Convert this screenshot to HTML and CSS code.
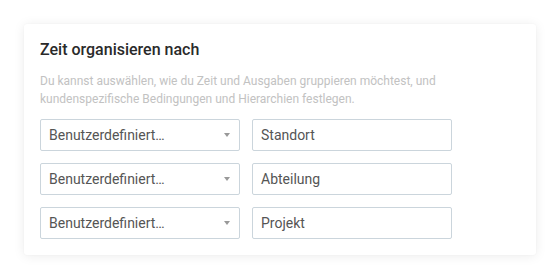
FILE: index.html
```html
<!DOCTYPE html>
<html lang="de">
<head>
<meta charset="utf-8">
<link rel="stylesheet" href="styles.css">
</head>
<body>
<div class="card">
  <h2 class="title">Zeit organisieren nach</h2>
  <p class="desc">Du kannst auswählen, wie du Zeit und Ausgaben gruppieren möchtest, und kundenspezifische Bedingungen und Hierarchien festlegen.</p>
  <div class="rows">
    <div class="row">
      <div class="select"><span>Benutzerdefiniert…</span><span class="caret"></span></div>
      <div class="input">Standort</div>
    </div>
    <div class="row">
      <div class="select"><span>Benutzerdefiniert…</span><span class="caret"></span></div>
      <div class="input">Abteilung</div>
    </div>
    <div class="row">
      <div class="select"><span>Benutzerdefiniert…</span><span class="caret"></span></div>
      <div class="input">Projekt</div>
    </div>
  </div>
</div>
</body>
</html>
```

FILE: styles.css
```css
* { box-sizing: border-box; }
html, body { margin: 0; background: #ffffff; }
body {
  padding: 24px;
  font-family: Roboto, "Liberation Sans", sans-serif;
}
.card {
  width: 512px;
  height: 231px;
  background: #fff;
  border-radius: 3px;
  box-shadow: 0 1px 12px rgba(0, 0, 0, 0.08), 0 0 2px rgba(0,0,0,0.04);
  padding: 16px;
}
.title {
  margin: 0;
  font-size: 16px;
  font-weight: 500;
  color: #2a2a2a;
  line-height: 20px;
}
.desc {
  margin: 12px 0 0 0;
  font-size: 12px;
  line-height: 18px;
  color: #c2c2c2;
  width: 420px;
}
.rows {
  margin-top: 11px;
  display: flex;
  flex-direction: column;
  gap: 12px;
}
.row {
  display: flex;
  gap: 12px;
}
.select, .input {
  width: 200px;
  height: 32px;
  border: 1px solid #cbd5dc;
  border-radius: 2px;
  font-size: 14px;
  color: #555;
  display: flex;
  align-items: center;
  padding: 0 8px;
}
.select { justify-content: space-between; padding-right: 9px; }
.caret {
  width: 0; height: 0;
  border-left: 3.5px solid transparent;
  border-right: 3.5px solid transparent;
  border-top: 4px solid #999;
}
```
